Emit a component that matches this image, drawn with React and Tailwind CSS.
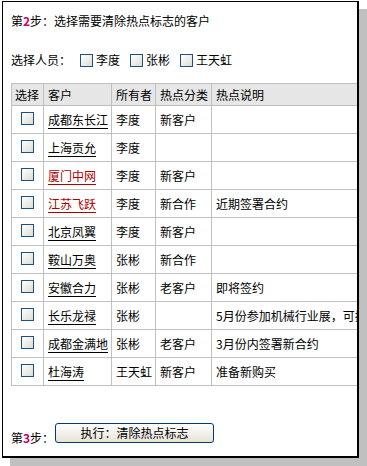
import React from "react";

const rows = [
  { name: "成都东长江", owner: "李度", cat: "新客户", note: "" },
  { name: "上海贡允", owner: "李度", cat: "", note: "" },
  { name: "厦门中网", owner: "李度", cat: "新客户", note: "", red: true },
  { name: "江苏飞跃", owner: "李度", cat: "新合作", note: "近期签署合约", red: true },
  { name: "北京凤翼", owner: "李度", cat: "新客户", note: "" },
  { name: "鞍山万奥", owner: "张彬", cat: "新合作", note: "" },
  { name: "安徽合力", owner: "张彬", cat: "老客户", note: "即将签约" },
  { name: "长乐龙禄", owner: "张彬", cat: "", note: "5月份参加机械行业展，可把握机会" },
  { name: "成都金满地", owner: "张彬", cat: "老客户", note: "3月份内签署新合约" },
  { name: "杜海涛", owner: "王天虹", cat: "新客户", note: "准备新购买" },
];

function Box() {
  return (
    <span className="inline-block w-[13px] h-[13px] border border-[#1c5180] bg-gradient-to-br from-white to-[#dcdcd5] align-middle" />
  );
}

export default function App() {
  return (
    <div
      className="w-[367px] h-[466px] bg-white pt-px pl-[2px]"
      style={{ fontFamily: '"Noto Sans CJK SC", "Liberation Sans", sans-serif' }}
    >
      <div className="w-[357px] h-[457px] border-l border-t border-r-2 border-b-2 border-black bg-white shadow-[8px_8px_0_#c0c0c0] overflow-hidden pl-2 pt-[11px] text-[12px] leading-[16px] text-black">
        <div className="whitespace-nowrap">
          第<span className="font-bold text-[#cc0066]">2</span>步：选择需要清除热点标志的客户
        </div>
        <div className="flex items-center mt-[23px] h-[16px] whitespace-nowrap">
          <span>选择人员：</span>
          <span className="ml-[9px] flex items-center gap-[3px]"><Box />李度</span>
          <span className="ml-[10px] flex items-center gap-[3px]"><Box />张彬</span>
          <span className="ml-[10px] flex items-center gap-[3px]"><Box />王天虹</span>
        </div>
        <table className="border-collapse mt-[15px] whitespace-nowrap">
          <thead>
            <tr className="bg-[#e6e6e6]">
              <td className="border border-[#c0c0c0] h-[22px] w-[32px] min-w-[32px] pl-[3px] p-0">选择</td>
              <td className="border border-[#c0c0c0] h-[22px] w-[68px] min-w-[68px] pl-[4px] p-0">客户</td>
              <td className="border border-[#c0c0c0] h-[22px] w-[44px] min-w-[44px] pl-[4px] p-0">所有者</td>
              <td className="border border-[#c0c0c0] h-[22px] w-[56px] min-w-[56px] pl-[4px] p-0">热点分类</td>
              <td className="border border-[#c0c0c0] h-[22px] pl-[4px] pr-4 p-0">热点说明</td>
            </tr>
          </thead>
          <tbody>
            {rows.map((r) => (
              <tr key={r.name}>
                <td className="border border-[#c0c0c0] h-[28px] p-0 text-center">
                  <span className="inline-flex justify-center"><Box /></span>
                </td>
                <td className="border border-[#c0c0c0] h-[28px] p-0 pl-[4px]">
                  <span className={"underline underline-offset-[3px] " + (r.red ? "text-[#aa0000]" : "text-black")}>
                    {r.name}
                  </span>
                </td>
                <td className="border border-[#c0c0c0] h-[28px] p-0 pl-[4px]">{r.owner}</td>
                <td className="border border-[#c0c0c0] h-[28px] p-0 pl-[4px]">{r.cat}</td>
                <td className="border border-[#c0c0c0] h-[28px] p-0 pl-[4px] pr-4">{r.note}</td>
              </tr>
            ))}
          </tbody>
        </table>
        <div className="flex items-end mt-[37px] whitespace-nowrap">
          <span className="mb-[-3px]">第<span className="font-bold text-[#cc0066]">3</span>步：</span>
          <button className="ml-px w-[159px] h-[20px] border border-[#003c74] rounded-[3px] bg-gradient-to-b from-white to-[#e6e3d6] text-[12px] leading-[16px] text-black">
            执行：清除热点标志
          </button>
        </div>
      </div>
    </div>
  );
}
